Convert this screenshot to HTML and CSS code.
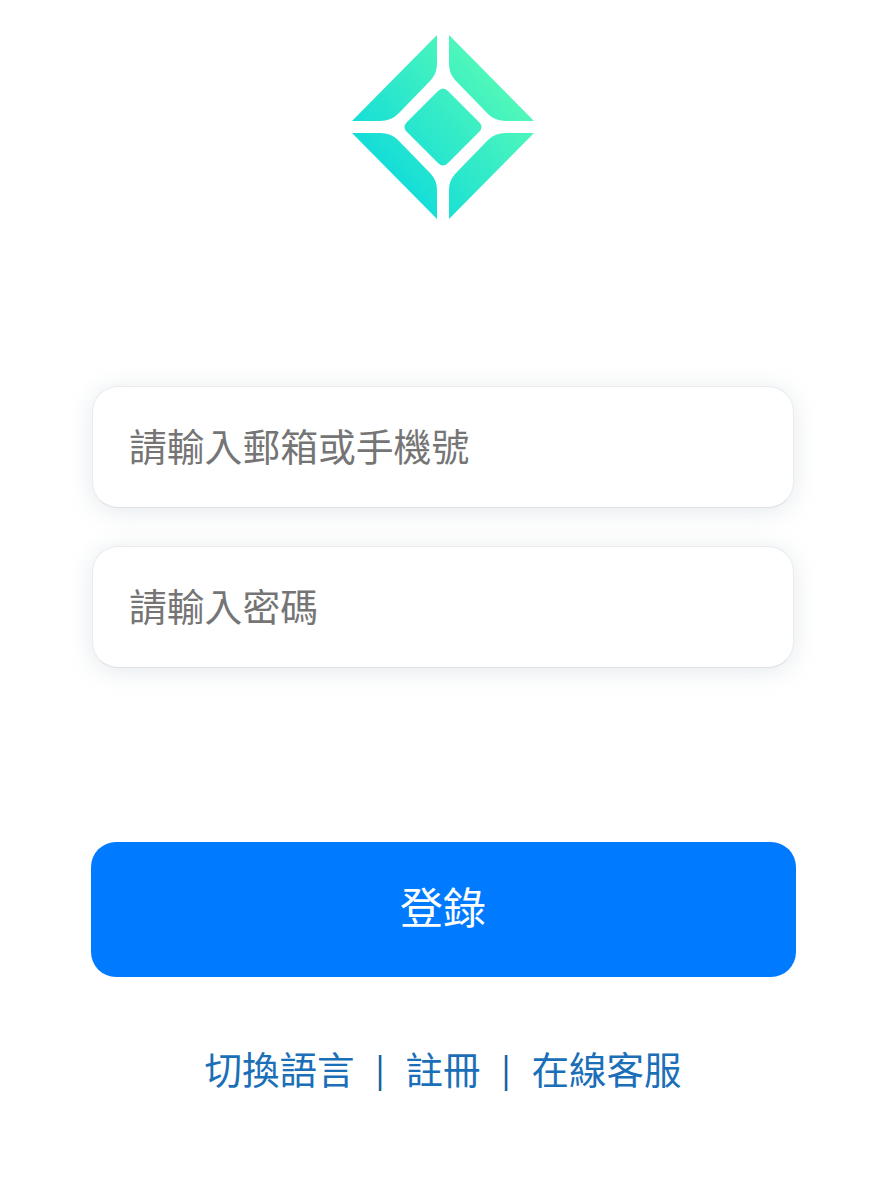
FILE: index.html
```html
<!DOCTYPE html>
<html lang="zh-Hant">
<head>
<meta charset="utf-8">
<title>登錄</title>
<link rel="stylesheet" href="styles.css">
</head>
<body>
<main class="login">
  <svg class="logo" viewBox="0 0 186 186" aria-hidden="true">
    <defs>
      <linearGradient id="gem" gradientUnits="userSpaceOnUse" x1="40" y1="170" x2="165" y2="60">
        <stop offset="0" stop-color="#0cdadc"/>
        <stop offset="1" stop-color="#52f8b8"/>
      </linearGradient>
    </defs>
    <g fill="url(#gem)">
      <path d="M87 1 L87 30 Q87 39 81 46 L48 80 Q41 87 30 87 L2 87 Z"/>
      <path d="M99 1 L99 30 Q99 39 105 46 L138 80 Q145 87 156 87 L184 87 Z"/>
      <path d="M87 185 L87 156 Q87 147 81 140 L48 106 Q41 99 30 99 L2 99 Z"/>
      <path d="M99 185 L99 156 Q99 147 105 140 L138 106 Q145 99 156 99 L184 99 Z"/>
      <path d="M88 57 Q93 52 98 57 L129 88 Q134 93 129 98 L98 129 Q93 134 88 129 L57 98 Q52 93 57 88 Z"/>
    </g>
  </svg>

  <form class="form">
    <div class="fields">
      <input class="field" type="text" placeholder="請輸入郵箱或手機號">
      <input class="field" type="password" placeholder="請輸入密碼">
    </div>
    <button class="submit" type="button">登錄</button>
  </form>

  <nav class="links">
    <a href="#">切換語言</a>
    <span class="sep">|</span>
    <a href="#">註冊</a>
    <span class="sep">|</span>
    <a href="#">在線客服</a>
  </nav>
</main>
</body>
</html>
```

FILE: styles.css
```css
html, body {
  margin: 0;
  height: 100%;
  background: #fff;
}

body {
  font-family: "Noto Sans CJK TC", "Noto Sans", sans-serif;
}

.login {
  display: flex;
  flex-direction: column;
  align-items: center;
  padding-top: 34px;
  box-sizing: border-box;
  height: 1181px;
  overflow: hidden;
}

.logo {
  display: block;
  width: 186px;
  height: 186px;
}

.form {
  display: flex;
  flex-direction: column;
  align-items: center;
  margin-top: 166px;
}

.fields {
  display: flex;
  flex-direction: column;
  gap: 38px;
}

.field {
  display: block;
  box-sizing: border-box;
  width: 702px;
  height: 122px;
  padding: 0 36px 6px;
  border: 1px solid #e9ecee;
  border-bottom-color: #dde1e4;
  border-radius: 26px;
  background: #fff;
  box-shadow: 0 3px 24px rgba(130, 155, 170, 0.22);
  font: 400 37.8px "Noto Sans CJK TC", sans-serif;
  outline: none;
}

.field::placeholder {
  color: #757575;
  opacity: 1;
}

.submit {
  display: block;
  width: 705px;
  height: 135px;
  margin-top: 174px;
  padding: 0 0 10px;
  border: 0;
  border-radius: 25px;
  background: #007bff;
  color: #fff;
  font: 400 43px "Noto Sans CJK TC", sans-serif;
}

.links {
  display: flex;
  align-items: center;
  gap: 21px;
  margin-top: 64px;
  font-size: 37.5px;
  line-height: 54px;
  color: #1a6fb8;
}

.links a {
  color: inherit;
  text-decoration: none;
}

.sep {
  font-size: 32px;
  font-weight: 500;
  color: #17639f;
}
```
